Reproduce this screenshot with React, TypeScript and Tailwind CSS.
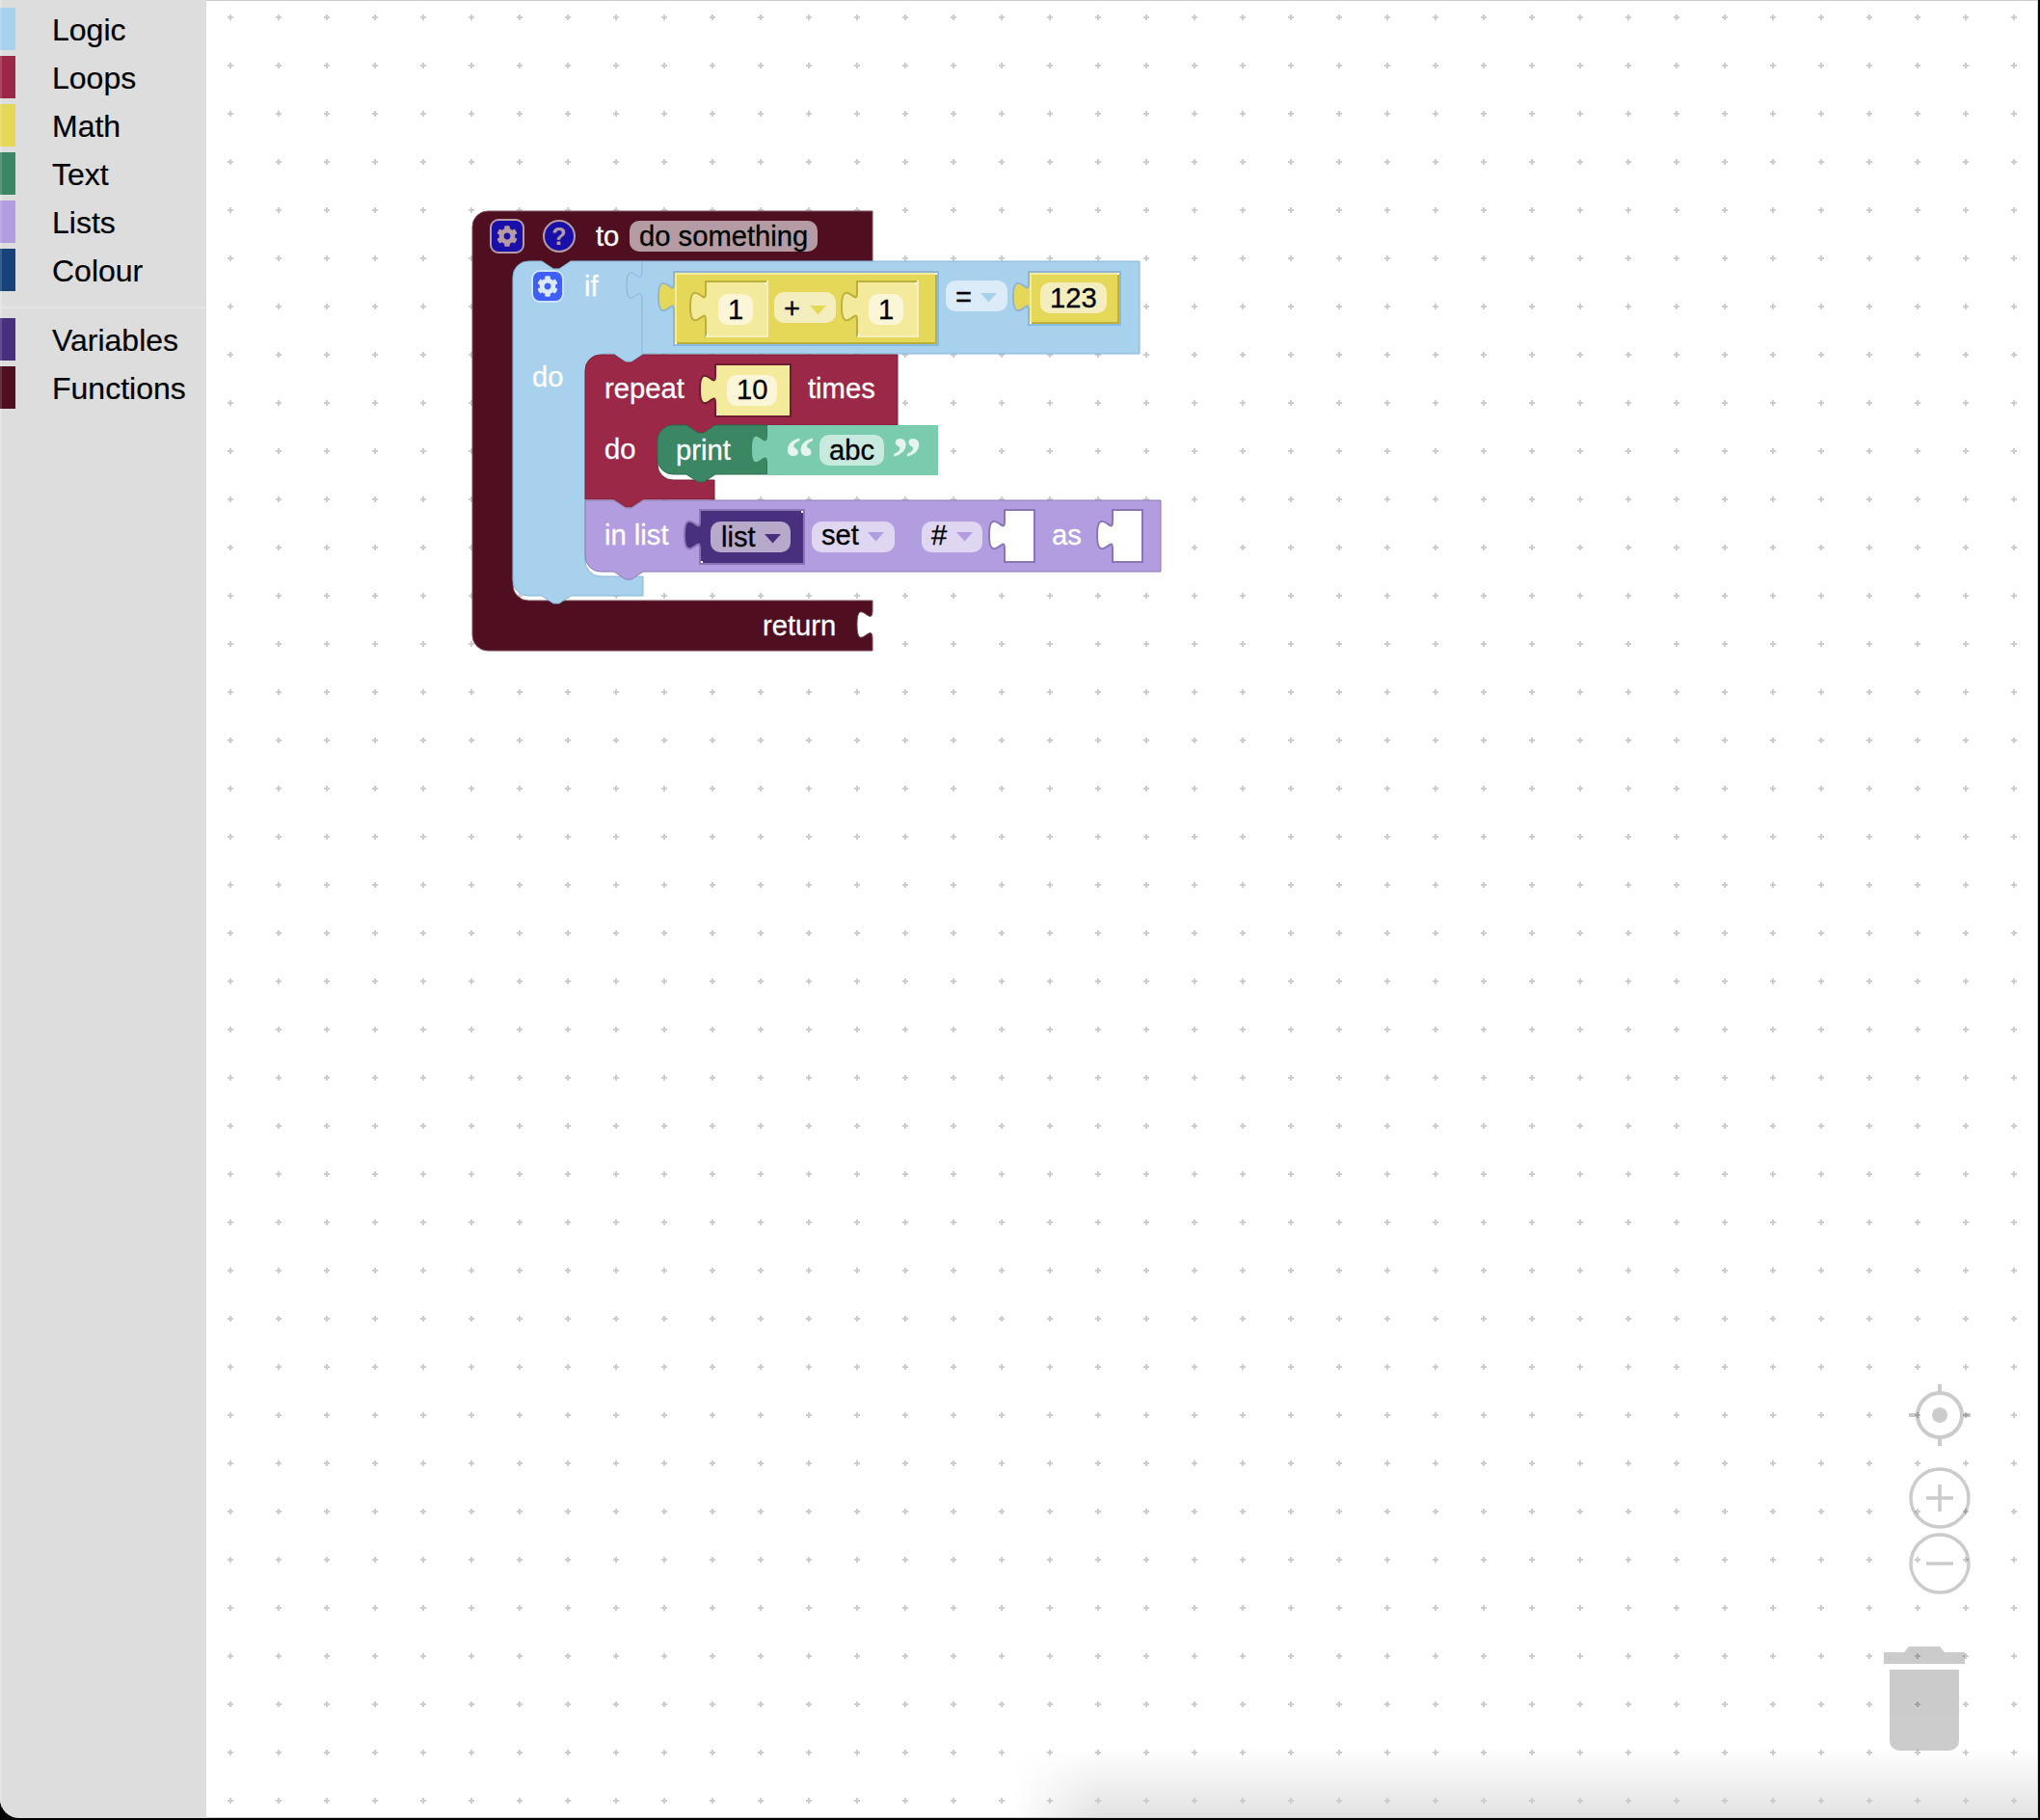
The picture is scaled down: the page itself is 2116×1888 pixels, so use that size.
import type { ReactNode } from "react";
import { FaCog } from "react-icons/fa";

const categories = [
  { name: "Logic", color: "bg-[#a8d1ee]" },
  { name: "Loops", color: "bg-[#9b2846]" },
  { name: "Math", color: "bg-[#e5d858]" },
  { name: "Text", color: "bg-[#3b8764]" },
  { name: "Lists", color: "bg-[#b19de0]" },
  { name: "Colour", color: "bg-[#17437a]" },
];

const moreCategories = [
  { name: "Variables", color: "bg-[#48307f]" },
  { name: "Functions", color: "bg-[#4f0f21]" },
];

const Category = ({ name, color }: { name: string; color: string }) => (
  <div className="flex h-[44px] mb-[6px] items-center">
    <div className={`w-4 h-full border-l-2 border-white/15 ${color}`} />
    <span className="ml-[38px] pt-[2px] text-[32px] leading-none text-black [-webkit-text-stroke:0.2px_black]">{name}</span>
  </div>
);

const Toolbox = () => (
  <div className="w-[214px] shrink-0 h-full bg-[#dddddd] shadow-[inset_2px_0_0_#e4e4e4] pt-2">
    {categories.map((c) => (
      <Category key={c.name} {...c} />
    ))}
    <div className="h-[2px] bg-[#e6e6e6] mt-[16px] mb-[10px]" />
    {moreCategories.map((c) => (
      <Category key={c.name} {...c} />
    ))}
  </div>
);

// notch that a statement block leaves on its top edge, drawn left to right
const NOTCH_R = "l12,8 6,0 12,-8";
// same notch on a bottom edge, drawn right to left
const NOTCH_L = "l-12,8 -6,0 -12,-8";

type ValueProps = {
  x: number;
  y: number;
  w: number;
  h: number;
  fill: string;
  slot: string;
  slotEdge?: string;
  light?: string;
  dark?: string;
  dots?: boolean;
};

const Value = ({ x, y, w, h, fill, slot, slotEdge, light, dark, dots = true }: ValueProps) => {
  const d = `M${x},${y}H${x + w}V${y + h}H${x}V${y + 40}c0,-20 -16,16 -16,-15 s16,5 16,-15 V${y}Z`;
  return (
    <g>
      <path d={d} fill={slot} stroke={slot} strokeWidth={4} />
      {slotEdge && (
        <path d={`M${x + w + 1},${y - 2}V${y + h + 1}H${x - 1}`} fill="none" stroke={slotEdge} strokeWidth={2} />
      )}
      <path d={d} fill={fill} />
      {dark && <path d={`M${x + w - 1},${y + 1}V${y + h - 1}H${x + 1}`} fill="none" stroke={dark} strokeWidth={2} />}
      {light && <path d={`M${x + 1},${y + h - 1}V${y + 1}H${x + w - 1}`} fill="none" stroke={light} strokeWidth={2} />}
      {dots && (
        <>
          <rect x={x + w - 2} y={y} width={2} height={2} fill="#fff" />
          <rect x={x} y={y + h - 2} width={2} height={2} fill="#fff" />
        </>
      )}
    </g>
  );
};

const Field = ({ x, y, w, fill }: { x: number; y: number; w: number; fill: string }) => (
  <rect x={x} y={y} width={w} height={32} rx={10} fill={fill} />
);

const Arrow = ({ x, y, fill }: { x: number; y: number; fill: string }) => (
  <path d={`M${x},${y}h17l-8.5,9.5Z`} fill={fill} />
);

const Label = ({ x, y, children, dark }: { x: number; y: number; children: ReactNode; dark?: boolean }) => (
  <text
    x={x}
    y={y}
    className={`text-[29.2px] stroke-[0.3px] ${dark ? "fill-black stroke-black" : "fill-white stroke-white"}`}
  >
    {children}
  </text>
);

const Blocks = () => (
  <g>
    {/* to do something ... return */}
    <path
      d={`M490,235a16,16 0 0 1 16,-16H905V271H592${NOTCH_L}H550V289H532V607a16,16 0 0 0 16,16H905V633c0,20 -16,-16 -16,15 s16,-5 16,15V675H506a16,16 0 0 1 -16,-16Z`}
      fill="#4f0f21"
      stroke="#7a4a59"
      strokeWidth={1}
    />
    <rect x={509} y={228} width={34} height={34} rx={8} fill="#1a0fa8" stroke="#b59ca4" strokeWidth={2} />
    <FaCog x={515} y={234} size={22} color="#b59ca4" />
    <circle cx={580} cy={245} r={16} fill="#1a0fa8" stroke="#b59ca4" strokeWidth={2} />
    <text x={580} y={254} textAnchor="middle" className="text-[25px] font-bold fill-[#b59ca4]">
      ?
    </text>
    <Label x={618} y={255}>to</Label>
    <rect x={653} y={229} width={195} height={32} rx={10} fill="#b59ca4" />
    <Label x={663} y={255} dark>do something</Label>
    <Label x={791} y={659}>return</Label>

    {/* if / do */}
    <path
      d={`M532,287a16,16 0 0 1 16,-16H562${NOTCH_R}H667V367${NOTCH_L}H625V386H607V582a16,16 0 0 0 16,16H667V618H592${NOTCH_L}H548a16,16 0 0 1 -16,-16Z`}
      fill="#a8d1ee"
      stroke="#86b4d8"
      strokeWidth={1}
    />
    <rect x={552} y={281} width={32} height={32} rx={8} fill="#3f5ffa" stroke="#cde3f7" strokeWidth={2} />
    <FaCog x={557} y={286} size={22} color="#dbe9f8" />
    <Label x={606} y={307}>if</Label>
    <Label x={552} y={401}>do</Label>

    {/* compare */}
    <path
      d="M666,271H1182V367H666V311c0,-20 -16,16 -16,-15 s16,5 16,-15Z"
      fill="#a8d1ee"
      stroke="#86b4d8"
      strokeWidth={1}
    />
    <Value x={700} y={283} w={272} h={74} fill="#e5d858" slot="#8fb5d2" slotEdge="#86bce3" light="#f3ea9c" dark="#bdaf3c" />
    <Value x={733} y={293} w={62} h={55} fill="#f3ea9c" slot="#bdaf3c" slotEdge="#f7f0bd" />
    <Field x={745} y={305} w={36} fill="#fbf6d8" />
    <Label x={755} y={331} dark>1</Label>
    <Field x={803} y={303} w={64} fill="#f4eebf" />
    <Label x={813} y={330} dark>+</Label>
    <Arrow x={840} y={317} fill="#e5d858" />
    <Value x={890} y={293} w={61} h={55} fill="#f3ea9c" slot="#bdaf3c" slotEdge="#f7f0bd" />
    <Field x={901} y={305} w={36} fill="#fbf6d8" />
    <Label x={911} y={331} dark>1</Label>
    <Field x={981} y={291} w={64} fill="#dbecf8" />
    <Label x={991} y={318} dark>=</Label>
    <Arrow x={1017} y={304} fill="#a8d1ee" />
    <Value x={1068} y={283} w={93} h={53} fill="#e5d858" slot="#8fb5d2" slotEdge="#86bce3" light="#f3ea9c" dark="#bdaf3c" />
    <Field x={1079} y={293} w={69} fill="#f4eebf" />
    <Label x={1089} y={319} dark>123</Label>

    {/* repeat */}
    <path
      d={`M607,384a16,16 0 0 1 16,-16H637${NOTCH_R}H931V441H742${NOTCH_L}H700V459H682V482a16,16 0 0 0 16,16H741V518H667${NOTCH_L}H607Z`}
      fill="#9b2846"
      stroke="#7b1f38"
      strokeWidth={1}
    />
    <Label x={627} y={413}>repeat</Label>
    <Value x={743} y={379} w={76} h={52} fill="#f3ea9c" slot="#6f1c33" />
    <Field x={754} y={389} w={52} fill="#fbf6d8" />
    <Label x={764} y={414} dark>10</Label>
    <Label x={838} y={413}>times</Label>
    <Label x={627} y={476}>do</Label>

    {/* print */}
    <path
      d={`M682,457a16,16 0 0 1 16,-16H712${NOTCH_R}H796V492H742${NOTCH_L}H698a16,16 0 0 1 -16,-16Z`}
      fill="#3b8764"
      stroke="#2f6c50"
      strokeWidth={1}
    />
    <Label x={701} y={477}>print</Label>
    <path d="M796,441H973V493H796V481c0,-20 -16,16 -16,-15 s16,5 16,-15Z" fill="#7bcbae" />
    <text x={814} y={495} className="text-[62px] font-bold fill-[#e4f4ee] font-['Liberation_Serif',serif]">
      “
    </text>
    <text x={925} y={495} className="text-[62px] font-bold fill-[#e4f4ee] font-['Liberation_Serif',serif]">
      ”
    </text>
    <Field x={850} y={451} w={67} fill="#c8e9dd" />
    <Label x={860} y={477} dark>abc</Label>

    {/* in list */}
    <path
      d={`M607,519H637${NOTCH_R}H1204V593H667${NOTCH_L}H623a16,16 0 0 1 -16,-16Z`}
      fill="#b19de0"
      stroke="#8c7cb3"
      strokeWidth={1}
    />
    <Label x={627} y={565}>in list</Label>
    <Value x={727} y={530} w={106} h={54} fill="#48307f" slot="#8977b5" />
    <Field x={737} y={541} w={83} fill="#b6a9c9" />
    <Label x={748} y={567} dark>list</Label>
    <Arrow x={793} y={554} fill="#48307f" />
    <Field x={842} y={541} w={86} fill="#dfd7f2" />
    <Label x={852} y={565} dark>set</Label>
    <Arrow x={900} y={552} fill="#b19de0" />
    <Field x={956} y={541} w={63} fill="#dfd7f2" />
    <Label x={966} y={565} dark>#</Label>
    <Arrow x={992} y={552} fill="#b19de0" />
    <Value x={1043} y={530} w={29} h={52} fill="#ffffff" slot="#8977b5" dots={false} />
    <Label x={1091} y={565}>as</Label>
    <Value x={1155} y={530} w={29} h={52} fill="#ffffff" slot="#8977b5" dots={false} />
  </g>
);

// zoom controls and trash, Blockly draws them translucent above the grid
const Controls = () => (
  <g className="opacity-20">
    <circle cx={2012} cy={1468} r={23} fill="none" stroke="#000" strokeWidth={4} />
    <circle cx={2012} cy={1468} r={8} fill="#000" />
    <path d="M2012,1436v10M2012,1490v10M1980,1468h10M2034,1468h10" stroke="#000" strokeWidth={4} />
    <circle cx={2012} cy={1554} r={30} fill="none" stroke="#000" strokeWidth={3.5} />
    <path d="M1998,1554h28M2012,1540v28" stroke="#000" strokeWidth={3.5} />
    <circle cx={2012} cy={1622} r={30} fill="none" stroke="#000" strokeWidth={3.5} />
    <path d="M1998,1622h28" stroke="#000" strokeWidth={3.5} />
    <path d="M1954,1714H1975L1980,1708H2012L2017,1714H2038V1726H1954Z" fill="#000" />
    <path d="M1960,1732H2032V1806a10,10 0 0 1 -10,10H1970a10,10 0 0 1 -10,-10Z" fill="#000" />
  </g>
);

const Workspace = () => (
  <div className="relative flex-1 h-full bg-white border border-l-0 border-[#cccccc]">
    <div className="absolute left-[836px] right-0 bottom-0 h-[72px] bg-gradient-to-t from-[#e2e2e2] to-transparent [mask-image:linear-gradient(to_right,transparent,black_90px)]" />
    <svg className="absolute top-[-1px] left-0 w-[1899px] h-[1886px]" viewBox="214 0 1899 1886">
      <defs>
        <pattern id="grid" patternUnits="userSpaceOnUse" x={214} y={0} width={50} height={50}>
          <rect x={22} y={17} width={6} height={2} fill="#cccccc" />
          <rect x={24} y={15} width={2} height={6} fill="#cccccc" />
        </pattern>
      </defs>
      <rect x={214} y={0} width={1899} height={1886} fill="url(#grid)" />
      <Blocks />
      <Controls />
    </svg>
  </div>
);

export default function App() {
  return (
    <div className="w-[2116px] h-[1888px] bg-black overflow-hidden">
      <div className="flex w-[2114px] h-[1886px] rounded-bl-[20px] overflow-hidden font-['Liberation_Sans',sans-serif]">
        <Toolbox />
        <Workspace />
      </div>
    </div>
  );
}
